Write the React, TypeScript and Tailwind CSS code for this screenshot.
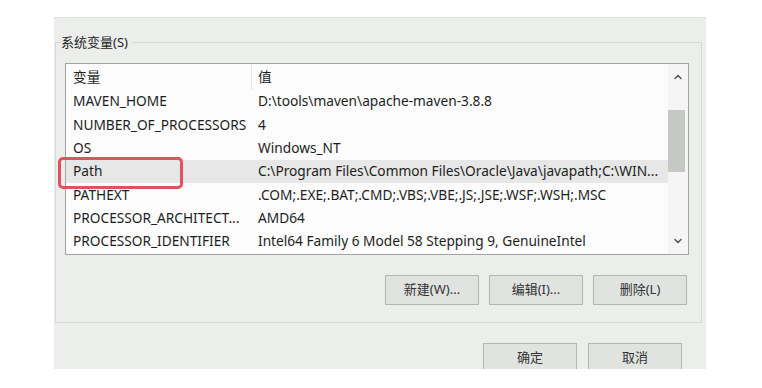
import { ChevronUp, ChevronDown } from "lucide-react";

const ROWS: { name: string; value: string; selected?: boolean }[] = [
  { name: "MAVEN_HOME", value: "D:\\tools\\maven\\apache-maven-3.8.8" },
  { name: "NUMBER_OF_PROCESSORS", value: "4" },
  { name: "OS", value: "Windows_NT" },
  {
    name: "Path",
    value: "C:\\Program Files\\Common Files\\Oracle\\Java\\javapath;C:\\WIN...",
    selected: true,
  },
  { name: "PATHEXT", value: ".COM;.EXE;.BAT;.CMD;.VBS;.VBE;.JS;.JSE;.WSF;.WSH;.MSC" },
  { name: "PROCESSOR_ARCHITECT...", value: "AMD64" },
  { name: "PROCESSOR_IDENTIFIER", value: "Intel64 Family 6 Model 58 Stepping 9, GenuineIntel" },
];

function WinButton({ label }: { label: string }) {
  return (
    <button
      type="button"
      className="flex h-[30px] w-[94px] items-center justify-center border border-[#b4b6b4] bg-[#e1e3e1] text-[13px] text-[#333]"
    >
      {label}
    </button>
  );
}

export default function App() {
  return (
    <div
      className="relative h-[388px] w-[762px] overflow-hidden bg-white pl-[54px] pt-[17px] text-[#1e1e1e]"
      style={{ fontFamily: '"Noto Sans", "Noto Sans CJK SC", sans-serif' }}
    >
      <div className="h-[352px] w-[652px] overflow-hidden border-t border-[#dfe2df] bg-[#eceeec]">
        {/* 系统变量 group box */}
        <div className="relative ml-px mt-[24px] h-[281px] w-[647px] border border-[#d6d9d6]">
          <span className="absolute -top-[10px] left-[5px] bg-[#eceeec] pr-1 text-[13px] leading-[18px] text-[#222]">
            系统变量(S)
          </span>

          <div className="ml-[9px] mt-[20px] flex h-[192px] w-[624px] border border-[#a3a5a3] bg-[#fbfcfb]">
            <div className="flex-1 overflow-hidden text-[13.7px]">
              <div className="flex h-[26px] items-center">
                <div className="h-full w-[186px] border-r border-[#e4e6e4] pl-[7px] leading-[26px]">
                  变量
                </div>
                <div className="pl-[6px]">值</div>
              </div>
              {ROWS.map((r) => (
                <div
                  key={r.name}
                  className={`flex h-[23.3px] items-center whitespace-nowrap ${r.selected ? "bg-[#e6e7e6]" : ""}`}
                >
                  <div className="w-[186px] shrink-0 pl-[7px]">{r.name}</div>
                  <div className="pl-[6px]">{r.value}</div>
                </div>
              ))}
            </div>

            {/* scrollbar */}
            <div className="flex w-[20px] flex-col bg-[#f4f5f4]">
              <div className="flex h-[26px] items-center justify-center text-[#555]">
                <ChevronUp className="h-3 w-3" strokeWidth={3} />
              </div>
              <div className="mt-[20px] h-[62px] w-[17px] bg-[#c6c8c6]" />
              <div className="flex-1" />
              <div className="flex h-[26px] items-center justify-center text-[#555]">
                <ChevronDown className="h-3 w-3" strokeWidth={3} />
              </div>
            </div>
          </div>

          <div className="mr-[14px] mt-[20px] flex justify-end gap-[10px]">
            <WinButton label="新建(W)..." />
            <WinButton label="编辑(I)..." />
            <WinButton label="删除(L)" />
          </div>
        </div>

        <div className="mr-[24px] mt-[20px] flex justify-end gap-[11px]">
          <WinButton label="确定" />
          <WinButton label="取消" />
        </div>
      </div>

      {/* red annotation around Path */}
      <div className="absolute left-[58px] top-[157px] h-[32px] w-[125px] rounded-[5px] border-[3px] border-[#e5505c]" />
    </div>
  );
}
